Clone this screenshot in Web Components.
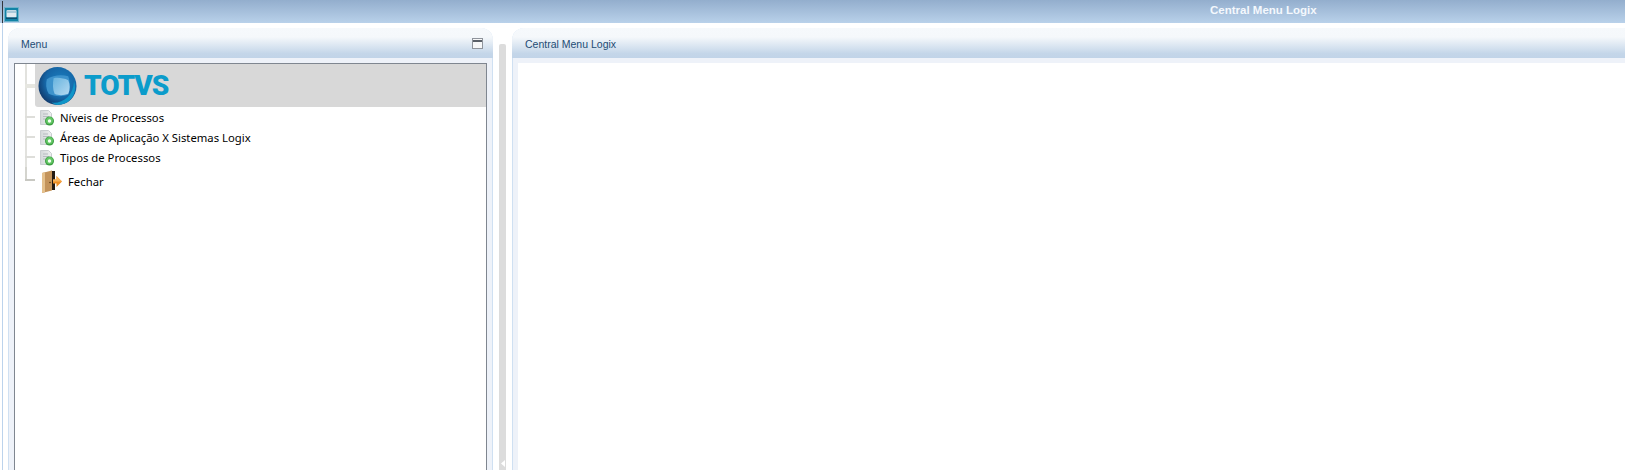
<!DOCTYPE html>
<html lang="pt">
<head>
<meta charset="utf-8">
<title>Central Menu Logix</title>
<style>
html, body { margin: 0; height: 100%; overflow: hidden; background: #fff; }
body { font-family: "Liberation Sans", Arial, sans-serif; }
</style>
</head>
<body>
<logix-app>
	<logix-titlebar slot="top">Central Menu Logix</logix-titlebar>
	<logix-panel slot="left" heading="Menu" collapsible>
		<logix-tree>
			<logix-logo-item></logix-logo-item>
			<logix-tree-item icon="doc">Níveis de Processos</logix-tree-item>
			<logix-tree-item icon="doc">Áreas de Aplicação X Sistemas Logix</logix-tree-item>
			<logix-tree-item icon="doc">Tipos de Processos</logix-tree-item>
			<logix-tree-item icon="door" last>Fechar</logix-tree-item>
		</logix-tree>
	</logix-panel>
	<logix-splitter slot="split"></logix-splitter>
	<logix-panel slot="right" heading="Central Menu Logix" open-end></logix-panel>
</logix-app>

<script>
const define = ( name, css, html, init ) =>
{
	customElements.define( name, class extends HTMLElement
	{
		constructor()
		{
			super();
			const shadow = this.attachShadow( { mode: 'open' } );
			const template = document.createElement( 'template' );
			template.innerHTML = `<style>${ css }</style>${ html }`;
			shadow.appendChild( template.content.cloneNode( true ) );
			if ( init ) { init( this, shadow ); }
		}
	} );
};

define( 'logix-app', `
	:host { display: flex; flex-direction: column; height: 100vh; overflow: hidden; position: relative; }
	.main { flex: 1; min-height: 0; display: flex; padding: 5px 0 0 8px; }
	.edge { position: absolute; left: 2px; top: 23px; bottom: 0; width: 1px; background: #bcd3ec; }
`, `
	<slot name="top"></slot>
	<div class="edge"></div>
	<div class="main">
		<slot name="left"></slot>
		<slot name="split"></slot>
		<slot name="right"></slot>
	</div>
` );

define( 'logix-titlebar', `
	:host { display: flex; flex: none; height: 23px; position: relative; padding-left: 1210px; box-sizing: border-box;
		background: linear-gradient( #93aecd, #b9d1ea ); color: #f4f8fd;
		font: bold 11.5px/21px "Liberation Sans", Arial, sans-serif; }
	.mark { position: absolute; left: 2px; top: 1px; width: 1px; height: 22px; background: #33363c; }
	svg { position: absolute; left: 4px; top: 7px; }
`, `
	<div class="mark"></div>
	<svg width="15" height="15" viewBox="0 0 15 15">
		<rect width="15" height="15" fill="#1283a6"/>
		<rect x=".5" y=".5" width="14" height="14" fill="none" stroke="#6fb2ca"/>
		<rect x="2.5" y="3" width="10" height="7.500" rx="1" fill="#dfeaf0"/>
		<rect x="3" y="3.500" width="9" height="2.500" fill="#a9c9d9"/>
		<rect x="2" y="10.500" width="11" height="1.500" fill="#0c4e6e"/>
	</svg>
	<slot></slot>
` );

define( 'logix-panel', `
	:host { display: flex; flex-direction: column; flex: none; width: 485px; box-sizing: border-box;
		background: #eef2f9; border-left: 1px solid #cfe0f2; border-right: 1px solid #cfe0f2; border-top-left-radius: 12px; border-top-right-radius: 12px; }
	:host([open-end]) { flex: 1; width: auto; border-right: 0; border-top-right-radius: 0; }
	header { flex: none; height: 30px; margin: 0 -1px; display: flex; align-items: center; justify-content: space-between;
		padding: 2px 10px 0 13px; box-sizing: border-box; border-radius: inherit; border-bottom-left-radius: 0; border-bottom-right-radius: 0;
		background: linear-gradient( #f6f9fc 0, #f5f8fb 30%, #c4d6e9 85%, #c1d4e8 100% );
		font: 10.5px "Liberation Sans", Arial, sans-serif; color: #234c74; }
	.body { flex: 1; min-height: 0; display: flex; padding: 5px 5px 0 5px; }
	:host([open-end]) .body { padding-right: 0; }
	::slotted( * ) { flex: 1; }
	.page { flex: 1; background: #fff; display: flex; }
	svg { display: block; margin-top: -2px; }
	:host( :not( [collapsible] ) ) svg { display: none; }
`, `
	<header><span class="title"></span>
		<svg width="11" height="11" viewBox="0 0 11 11">
			<rect x=".5" y=".5" width="10" height="10" fill="#f6f7f8" stroke="#8f949c"/>
			<rect x="1" y="2" width="9" height="2" fill="#5a6068"/>
		</svg>
	</header>
	<div class="body"><div class="page"><slot></slot></div></div>
`, ( host, shadow ) =>
{
	shadow.querySelector( '.title' ).textContent = host.getAttribute( 'heading' );
} );

define( 'logix-splitter', `
	:host { display: flex; flex-direction: column; justify-content: flex-end; flex: none; width: 7px; margin: 16px 6px 0 6px;
		background: #dcdcdc; border-radius: 2px 2px 0 0; padding-bottom: 3px; box-sizing: border-box; align-items: center; }
`, `<svg width="4" height="7" viewBox="0 0 4 7"><path d="M4 0v7L0 3.500z" fill="#fff"/></svg>` );

define( 'logix-tree', `
	:host { display: flex; flex-direction: column; box-sizing: border-box; padding: 0 0 0 10px;
		background: #fff; border: 1px solid #7f8690; border-bottom: 0; }
`, `<slot></slot>` );

const connector = `
	.line { flex: none; width: 10px; align-self: stretch; margin-right: 5px;
		background:
			linear-gradient( #dededa, #dededa ) 0 50% / 10px 2px no-repeat,
			linear-gradient( #e2e2de, #e2e2de ) 0 0 / 2px 100% no-repeat; }
	:host( [last] ) .line { background:
			linear-gradient( #c8c8c2, #c8c8c2 ) 0 12px / 10px 2px no-repeat,
			linear-gradient( #d4d4ce, #d4d4ce ) 0 0 / 2px 14px no-repeat; }
`;

define( 'logix-logo-item', connector + `
	:host { display: flex; height: 43px; }
	.line { margin-right: 0; background:
			linear-gradient( #e6e6e0, #e6e6e0 ) 0 50% / 10px 4px no-repeat,
			linear-gradient( #e2e2de, #e2e2de ) 0 0 / 2px 100% no-repeat; }
	.row { flex: 1; display: flex; align-items: center; gap: 7px; background: #d8d8d8; padding-left: 3px; border-radius: 0 0 0 3px; }
	.word { font: 900 28px/1 Roboto, "Liberation Sans", sans-serif; color: #0b9ccb; letter-spacing: -1px; }
	svg { display: block; }
`, `
	<div class="line"></div>
	<div class="row">
		<svg width="39" height="40" viewBox="0 0 40 40">
			<defs>
				<radialGradient id="ball" cx=".6" cy=".4" r=".7">
					<stop offset="0" stop-color="#1a7fc0"/>
					<stop offset=".6" stop-color="#1566a6"/>
					<stop offset="1" stop-color="#10305f"/>
				</radialGradient>
				<linearGradient id="core" x1="0" y1="0" x2="1" y2="1">
					<stop offset="0" stop-color="#68b4de"/>
					<stop offset="1" stop-color="#b5daf2"/>
				</linearGradient>
			</defs>
			<circle cx="20" cy="20" r="19.500" fill="url(#ball)"/>
			<path d="M14 37C26 38 36 30 37 15 41 28 33 39.500 20 39.500 18 39.500 16 38.500 14 37z" fill="#0f95c8"/>
			<path d="M9 13c6-4 15-5 22-3 2 5 2 13 0 19-6 2-14 2-20-1-3-5-3-10-2-15z" fill="#3d93cc"/>
			<path d="M16 12c5-1 10 0 15 2 2 4 2 10 0 14-5 2-10 2-14 0-2-5-2-10-1-16z" fill="url(#core)"/>
		</svg>
		<span class="word">TOTVS</span>
	</div>
` );

const icons =
{
	doc: `<svg class="icon" width="17" height="18" viewBox="0 0 17 18">
		<defs><linearGradient id="sheet" x1="0" y1="0" x2="1" y2="0"><stop offset="0" stop-color="#d4d8da"/><stop offset="1" stop-color="#eef0f0"/></linearGradient></defs>
		<path d="M.5 2.500h8l3 3v11H.5z" fill="url(#sheet)" stroke="#c9cdd0"/>
		<path d="M3 6h5M3 8.500h6M3 11h3" stroke="#b6bbc0"/>
		<circle cx="9.500" cy="13" r="4.500" fill="#3c9e42"/>
		<circle cx="9.500" cy="12.500" r="3.500" fill="#63c765"/>
		<circle cx="9.500" cy="13" r="1.700" fill="#f4fff2"/>
	</svg>`,
	door: `<svg class="icon" width="23" height="24" viewBox="0 0 23 24">
		<path d="M11 1h4v19h-4z" fill="#241a12"/>
		<path d="M2 3l10-2.500v20L2 23z" fill="#c3935a"/>
		<path d="M2 3l3-.700V22.300L2 23z" fill="#e4c08c"/>
		<circle cx="10" cy="12.500" r=".8" fill="#5c3a12"/>
		<path d="M13 9.500h3.500V6l5.500 5.500-5.500 5.500v-3.500H13z" fill="#ee8f25"/>
		<path d="M13 9.500h3.500V6l5.500 5.500h-9z" fill="#f7b35c"/>
	</svg>`,
};

define( 'logix-tree-item', connector + `
	:host { display: flex; align-items: center; height: 20px; font: 11.3px "Noto Sans", "Open Sans", sans-serif; color: #000; white-space: nowrap; }
	:host( [last] ) { height: 26px; }
	.label { margin-left: 3px; padding-top: 1px; }
	:host( [last] ) .label { margin-left: 5px; padding-top: 3px; }
	:host( [last] ) .slot-icon { margin-top: 3px; }
	svg { display: block; flex: none; }
`, `
	<div class="line"></div>
	<span class="slot-icon"></span>
	<span class="label"><slot></slot></span>
`, ( host, shadow ) =>
{
	shadow.querySelector( '.slot-icon' ).innerHTML = icons[ host.getAttribute( 'icon' ) ];
} );
</script>
</body>
</html>
